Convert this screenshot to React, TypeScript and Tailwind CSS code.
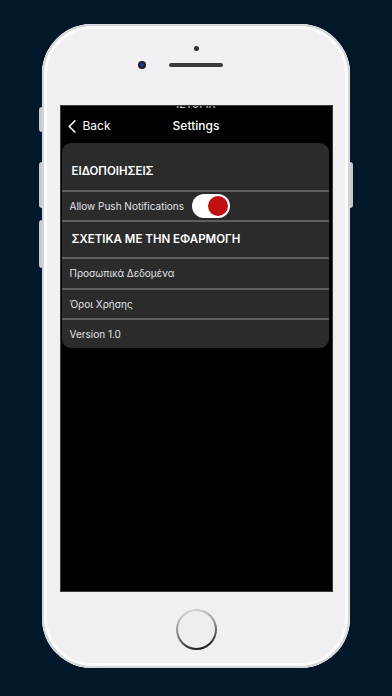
import { useState } from 'react';

const font = { fontFamily: 'Inter, "Noto Sans", sans-serif' };

function Divider() {
    return <div className="h-[2px] bg-[#5f5f61]" />;
}

function Row({ label }: { label: string }) {
    return (
        <div className="h-[28px] flex items-center pl-[8px] text-[10px] text-[#e4e4e6]">
            {label}
        </div>
    );
}

export default function App() {
    const [push, setPush] = useState(true);

    return (
        <div className="w-full h-[696px] bg-[#01182a] flex justify-center pt-[24px]" style={font}>
            <div className="relative w-[308px] h-[644px] rounded-[50px] bg-[#f0f0f2] shadow-[inset_0_0_0_2px_#d6d6da,inset_0_0_0_5px_#fbfbfc] flex flex-col items-center">
                {/* side buttons */}
                <div className="absolute left-[-3px] top-[83px] w-[3px] h-[25px] rounded-l-sm bg-[#c9c9cd]" />
                <div className="absolute left-[-3px] top-[138px] w-[3px] h-[46px] rounded-l-sm bg-[#c9c9cd]" />
                <div className="absolute left-[-3px] top-[196px] w-[3px] h-[48px] rounded-l-sm bg-[#c9c9cd]" />
                <div className="absolute right-[-3px] top-[138px] w-[3px] h-[46px] rounded-r-sm bg-[#c9c9cd]" />

                {/* top bezel */}
                <div className="h-[81px] w-full flex flex-col items-center">
                    <div className="mt-[22px] w-[5px] h-[5px] rounded-full bg-[#2e2e30]" />
                    <div className="relative mt-[12px] w-[54px] h-[4px] rounded-full bg-[#3a3a3c]">
                        <div className="absolute left-[-31px] top-[-2px] w-[8px] h-[8px] rounded-full bg-[#1c1c24] flex items-center justify-center">
                            <div className="w-[4px] h-[4px] rounded-full bg-[#1f3f9a]" />
                        </div>
                    </div>
                </div>

                {/* screen */}
                <div className="w-[273px] h-[487px] bg-black border border-[#3a3a3c] overflow-hidden">
                    <div className="h-[3px] overflow-hidden flex items-end justify-center">
                        <span className="text-[9px] leading-none font-semibold text-[#bdbdbd] tracking-wider">ΙΣΤΟΡΙΑ</span>
                    </div>
                    <div className="h-[34px] grid grid-cols-3 items-center text-white">
                        <div className="flex items-center gap-[7px] pl-[7px] text-[12px]">
                            <svg width="8" height="13" viewBox="0 0 8 13" fill="none">
                                <path d="M6.8 1 L1.3 6.5 L6.8 12" stroke="white" strokeWidth="1.7" strokeLinecap="round" strokeLinejoin="round" />
                            </svg>
                            <span>Back</span>
                        </div>
                        <div className="text-center text-[12px] font-medium">Settings</div>
                        <div />
                    </div>

                    <div className="ml-[1px] mr-[3px] rounded-[9px] bg-[#2b2b2c] overflow-hidden">
                        <div className="h-[47px] pt-[11px] flex items-center pl-[10px] text-[11.5px] font-semibold text-white">
                            ΕΙΔΟΠΟΙΗΣΕΙΣ
                        </div>
                        <Divider />
                        <div className="h-[28px] flex items-center gap-[8px] pl-[8px] text-[10px] text-[#e4e4e6]">
                            <span>Allow Push Notifications</span>
                            <button
                                onClick={() => setPush(!push)}
                                className={`w-[38px] h-[24px] rounded-full bg-white flex items-center px-[2px] ${push ? 'justify-end' : 'justify-start'}`}
                            >
                                <span className="w-[20px] h-[20px] rounded-full bg-[#c20f0f]" />
                            </button>
                        </div>
                        <Divider />
                        <div className="h-[35px] flex items-center pl-[10px] text-[11.5px] font-semibold text-white">
                            ΣΧΕΤΙΚΑ ΜΕ ΤΗΝ ΕΦΑΡΜΟΓΗ
                        </div>
                        <Divider />
                        <div className="h-[29px] flex items-center pl-[8px] text-[10px] text-[#e4e4e6]">
                            Προσωπικά Δεδομένα
                        </div>
                        <Divider />
                        <Row label="Όροι Χρήσης" />
                        <Divider />
                        <Row label="Version 1.0" />
                    </div>
                </div>

                {/* home button */}
                <div className="mt-[17px] w-[41px] h-[41px] rounded-full p-[2px] bg-[linear-gradient(165deg,#e4e4e8_0%,#9c9ca0_40%,#1e1e20_90%)]">
                    <div className="w-full h-full rounded-full bg-[#eeeef0]" />
                </div>
            </div>
        </div>
    );
}
